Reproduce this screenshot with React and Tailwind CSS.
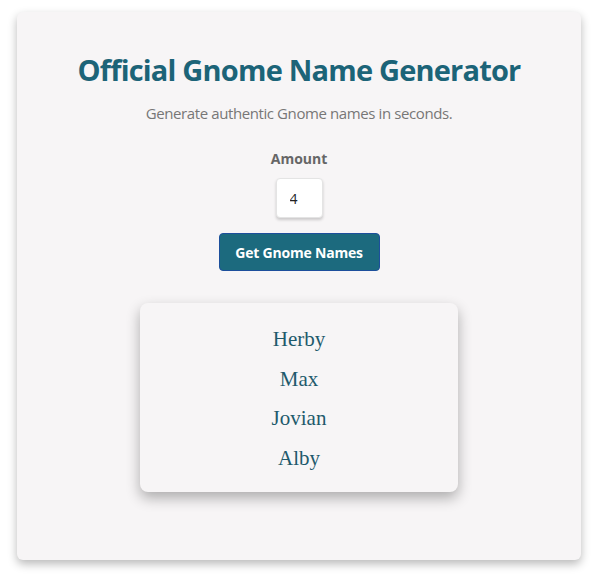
import React, { useState } from 'react';

const NAMES = ['Herby', 'Max', 'Jovian', 'Alby'];

const App = () => {
  const [amount, setAmount] = useState(4);

  return (
    <div className="min-h-screen bg-white px-[17px] pt-[12px]" style={{ fontFamily: '"Open Sans", sans-serif' }}>
      {/* Main card */}
      <div className="w-[564px] h-[548px] bg-[#f7f5f6] rounded-md shadow-[0_4px_10px_rgba(0,0,0,0.28)] flex flex-col items-center pt-[40px]">
        <h1 className="text-[29px] leading-[36px] font-bold text-[#1c6478] tracking-[-0.8px]">
          Official Gnome Name Generator
        </h1>
        <p className="mt-[15px] text-[15px] leading-[20px] text-[#777] tracking-[-0.4px]">
          Generate authentic Gnome names in seconds.
        </p>

        {/* Amount */}
        <label className="mt-[27px] text-[14px] leading-[18px] font-bold text-[#666]">
          Amount
        </label>
        <input
          type="number"
          value={amount}
          onChange={(e) => setAmount(e.target.value)}
          className="mt-[10px] w-[47px] h-[40px] bg-white rounded-sm border border-[#e4e4e4] shadow-[0_2px_3px_rgba(0,0,0,0.18)] pl-[13px] text-[14px] text-[#222] outline-none [appearance:textfield] [&::-webkit-inner-spin-button]:appearance-none"
        />
        <button className="mt-[15px] w-[161px] h-[38px] bg-[#1c6a7e] border border-[#1d4f9c] rounded-[4px] text-white text-[14px] font-bold tracking-[-0.2px]">
          Get Gnome Names
        </button>

        {/* Results */}
        <div className="mt-[32px] w-[318px] h-[189px] bg-[#f7f5f6] rounded-lg shadow-[0_6px_14px_rgba(0,0,0,0.3)] flex flex-col items-center pt-[20px]">
          {NAMES.map((name) => (
            <div
              key={name}
              className="h-[39.5px] text-[21px] leading-[32px] text-[#1e5a6c] font-['Liberation_Serif',serif]"
            >
              {name}
            </div>
          ))}
        </div>
      </div>
    </div>
  );
};

export default App;
